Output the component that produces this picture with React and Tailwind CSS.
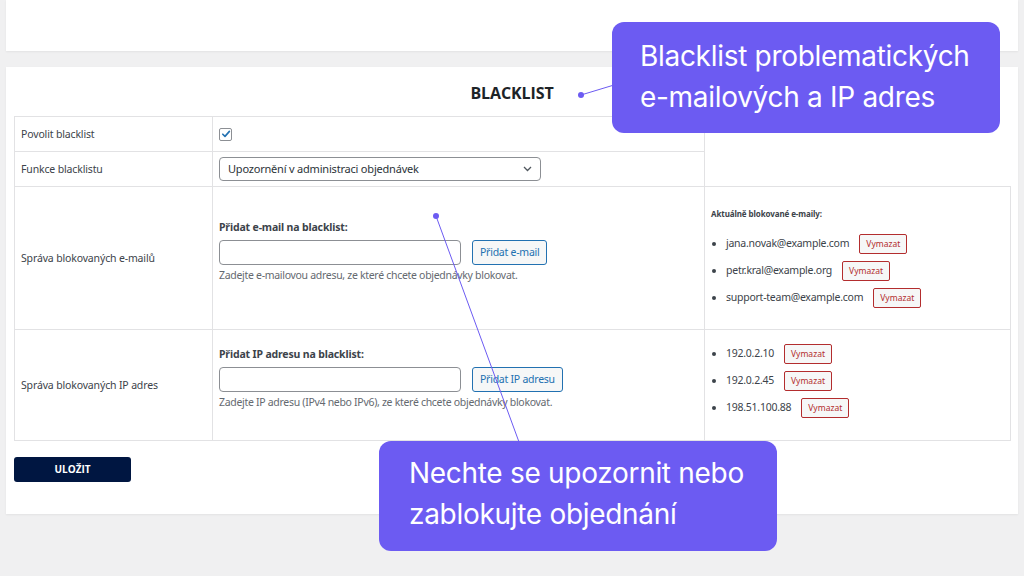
import React from 'react';

const emails = [
  { value: 'jana.novak@example.com' },
  { value: 'petr.kral@example.org' },
  { value: 'support-team@example.com' },
];

const ips = [{ value: '192.0.2.10' }, { value: '192.0.2.45' }, { value: '198.51.100.88' }];

const DeleteButton = () => (
  <button className="ml-[10px] h-[20px] px-[6px] rounded-[2px] border border-[#b32d2e] bg-[#f6f7f7] text-[#b32d2e] text-[8.5px] leading-none tracking-normal">
    Vymazat
  </button>
);

const BlockedList = ({ items }) => (
  <ul className="flex flex-col gap-[7px] pl-[15px] list-disc marker:text-[#3c434a]">
    {items.map((item) => (
      <li key={item.value} className="text-[10.5px] tracking-[-0.25px] text-[#3c434a]">
        <span className="inline-flex items-center">
          {item.value}
          <DeleteButton />
        </span>
      </li>
    ))}
  </ul>
);

const AddField = ({ label, buttonLabel, help }) => (
  <div className="flex flex-col mb-[12px]">
    <label className="text-[10.5px] tracking-[-0.15px] font-bold text-[#3c434a] mb-[4px]">{label}</label>
    <div className="flex items-center gap-[11px]">
      <input className="w-[242px] h-[25px] rounded-[4px] border border-[#8c8f94] bg-white" />
      <button className="h-[25px] px-[7px] rounded-[3px] border border-[#2271b1] bg-[#f6f7f7] text-[#2271b1] text-[10.5px] tracking-[-0.25px]">
        {buttonLabel}
      </button>
    </div>
    <p className="mt-[3px] text-[10.5px] tracking-[-0.3px] text-[#646970]">{help}</p>
  </div>
);

const Callout = ({ className, lines }) => (
  <div className={`absolute rounded-[12px] bg-[#6c5bf2] text-white text-[28px] leading-[41px] tracking-[-0.3px] ${className}`} style={{ fontFamily: 'Inter, sans-serif' }}>
    {lines.map((l) => (
      <div key={l}>{l}</div>
    ))}
  </div>
);

const labelCell = 'border border-[#e2e2e4] px-[6px] pt-[2px] text-[10.5px] tracking-[-0.15px] text-[#3c434a] align-middle';
const cell = 'border border-[#e2e2e4] px-[6px] align-middle';

export default function App() {
  return (
    <div className="relative w-[1024px] h-[576px] overflow-hidden bg-[#f0f0f1] px-[6px]" style={{ fontFamily: '"Noto Sans", "Open Sans", sans-serif' }}>
      <div className="h-[51px] bg-white shadow-[0_1px_2px_rgba(0,0,0,0.06)]" />

      <div className="mt-[16px] bg-white px-[8px] pt-[16px] pb-[32px] shadow-[0_1px_2px_rgba(0,0,0,0.06)]">
        <h2 className="text-center text-[16px] font-bold text-[#1d2327] leading-[20px] mb-[13px] tracking-[-0.1px]" style={{ fontFamily: '"Open Sans", sans-serif' }}>
          BLACKLIST
        </h2>

        <table className="w-[996px] border-collapse table-fixed">
          <colgroup>
            <col className="w-[198px]" />
            <col className="w-[492px]" />
            <col className="w-[306px]" />
          </colgroup>
          <tbody>
            <tr className="h-[35px]">
              <td className={labelCell}>Povolit blacklist</td>
              <td className={cell}>
                <span className="flex w-[13px] h-[13px] items-center justify-center rounded-[2px] border border-[#8c8f94] bg-white">
                  <svg width="10" height="10" viewBox="0 0 10 10">
                    <path d="M1.8 5.2 L4 7.4 L8.4 2.4" fill="none" stroke="#2271b1" strokeWidth="1.6" strokeLinecap="round" strokeLinejoin="round" />
                  </svg>
                </span>
              </td>
            </tr>
            <tr className="h-[35px]">
              <td className={labelCell}>Funkce blacklistu</td>
              <td className={cell}>
                <div className="flex w-[322px] h-[24px] items-center justify-between rounded-[4px] border border-[#8c8f94] pl-[8px] pr-[8px] text-[11px] tracking-[-0.2px] text-[#2c3338]">
                  <span>Upozornění v administraci objednávek</span>
                  <svg width="9" height="6" viewBox="0 0 9 6">
                    <path d="M1 1 L4.5 4.5 L8 1" fill="none" stroke="#50575e" strokeWidth="1.3" />
                  </svg>
                </div>
              </td>
            </tr>
            <tr className="h-[143px]">
              <td className={labelCell}>Správa blokovaných e-mailů</td>
              <td className={cell}>
                <AddField
                  label="Přidat e-mail na blacklist:"
                  buttonLabel="Přidat e-mail"
                  help="Zadejte e-mailovou adresu, ze které chcete objednávky blokovat."
                />
              </td>
              <td className={cell}>
                <div className="text-[8px] tracking-[-0.1px] font-bold text-[#3c434a] mb-[14px]">Aktuálně blokované e-maily:</div>
                <BlockedList items={emails} />
              </td>
            </tr>
            <tr className="h-[111px]">
              <td className={labelCell}>Správa blokovaných IP adres</td>
              <td className={cell}>
                <AddField
                  label="Přidat IP adresu na blacklist:"
                  buttonLabel="Přidat IP adresu"
                  help="Zadejte IP adresu (IPv4 nebo IPv6), ze které chcete objednávky blokovat."
                />
              </td>
              <td className={`${cell} pb-[8px]`}>
                <BlockedList items={ips} />
              </td>
            </tr>
          </tbody>
        </table>

        <button className="mt-[16px] w-[117px] h-[25px] rounded-[3px] bg-[#001641] text-white text-[10px] font-bold" style={{ fontFamily: '"Open Sans", sans-serif' }}>
          ULOŽIT
        </button>
      </div>

      <svg className="absolute left-0 top-0 pointer-events-none" width="1024" height="576">
        <line x1="581" y1="95" x2="614" y2="85" stroke="#6c5bf2" strokeWidth="1" />
        <circle cx="581" cy="95" r="3" fill="#6c5bf2" />
        <line x1="436" y1="216" x2="519" y2="442" stroke="#6c5bf2" strokeWidth="1" />
        <circle cx="436" cy="216" r="3" fill="#6c5bf2" />
      </svg>

      <Callout className="left-[612px] top-[22px] w-[388px] h-[111px] pl-[28px] pt-[14px]" lines={['Blacklist problematických', 'e-mailových a IP adres']} />
      <Callout className="left-[379px] top-[441px] w-[398px] h-[110px] pl-[30px] pt-[12px]" lines={['Nechte se upozornit nebo', 'zablokujte objednání']} />
    </div>
  );
}
